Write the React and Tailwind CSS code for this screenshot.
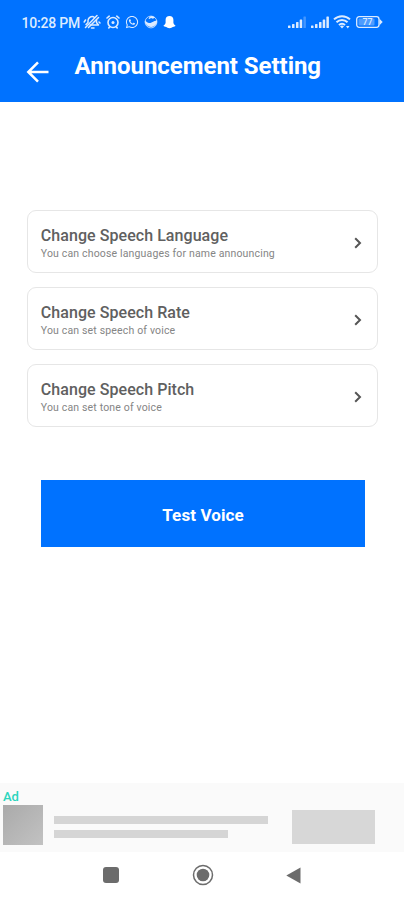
import { FaWhatsapp } from 'react-icons/fa';

const settings = [
  {
    id: 'language',
    title: 'Change Speech Language',
    description: 'You can choose languages for name announcing',
  },
  {
    id: 'rate',
    title: 'Change Speech Rate',
    description: 'You can set speech of voice',
  },
  {
    id: 'pitch',
    title: 'Change Speech Pitch',
    description: 'You can set tone of voice',
  },
];

const BellOffIcon = () => (
  <svg
    className="w-[18px] h-4"
    viewBox="0 0 18 16"
    fill="none"
    stroke="currentColor"
    strokeWidth="1.5"
    strokeLinecap="round"
    strokeLinejoin="round"
  >
    <path d="M3 10.500 5 8.500V6.500a4 4 0 0 1 6.500-3M13.500 6v2.500l2 2.500H7M8.500 14h2.500" />
    <path d="M2.500 13.500 14 1.500M5.500 13.500 15.500 3.500M1.200 8l1.300-2M16 8l1 1" />
  </svg>
);

const AlarmIcon = () => (
  <svg
    className="w-3.5 h-3.5"
    viewBox="0 0 14 14"
    fill="none"
    stroke="currentColor"
    strokeWidth="1.600"
    strokeLinecap="round"
  >
    <circle cx="7" cy="7.500" r="5" />
    <path d="M1 3 3.200 1.200M13 3l-2.200-1.800M3.500 12l-.7.900M10.500 12l.7.900" />
    <circle cx="7" cy="7.500" r="1.500" fill="currentColor" stroke="none" />
  </svg>
);

const BallIcon = () => (
  <svg className="w-3.5 h-3.5" viewBox="0 0 14 14">
    <circle
      cx="7"
      cy="7"
      r="5.900"
      fill="none"
      stroke="currentColor"
      strokeWidth="0.800"
    />
    <path
      d="M.8 6c1.500 0 2.500 2 4.500 2C8 8 9 6 13.200 5.500A6.200 6.200 0 0 1 .8 6z"
      fill="currentColor"
    />
    <path d="M4.500 3.500C5.500 2 6 1.200 8 .9l3 1.300-2 1.600-2-.8-1.500 1z" fill="currentColor" />
  </svg>
);

const GhostIcon = () => (
  <svg className="w-[13px] h-3.5 text-white" viewBox="0 0 13 14">
    <path
      d="M6.500 1C4 1 2.600 2.600 2.600 4.800v3C2.300 9.200 1.500 10 .5 10.600c.3 1.200 1.600 1.200 2.600 1.400.9.400 1.700 1.200 3.400 1.200s2.500-.8 3.400-1.200c1-.2 2.300-.2 2.600-1.400-1-.6-1.800-1.400-2.100-2.800v-3C10.400 2.600 9 1 6.500 1z"
      fill="currentColor"
    />
  </svg>
);

const SignalIcon = ({ weak }) => (
  <svg className="w-[18px] h-3" viewBox="0 0 18 12" fill="currentColor">
    <rect x="0" y="9.500" width="2.500" height="2.500" rx="0.600" />
    <rect x="4" y="8" width="2.500" height="4" rx="0.600" />
    <rect x="8" y="6" width="2.500" height="6" rx="0.600" />
    <rect x="11.700" y="3.500" width="2.500" height="8.500" rx="0.600" />
    <rect
      x="15.400"
      y="0.500"
      width="2.500"
      height="11.500"
      rx="0.600"
      opacity={weak ? 0.3 : 1}
    />
  </svg>
);

const WifiIcon = () => (
  <svg
    className="w-[18px] h-3.5"
    viewBox="0 0 18 14"
    fill="none"
    stroke="currentColor"
    strokeWidth="2"
  >
    <path d="M1 4.400a11.500 11.500 0 0 1 16 0M3.500 7.300a7.800 7.800 0 0 1 11 0M6 10.100a4.200 4.200 0 0 1 6 0" />
    <path d="M9 13.600 7 11.300a3 3 0 0 1 4 0z" fill="currentColor" stroke="none" />
    <path d="M13 11h3.500l-1.700 2.600z" fill="currentColor" stroke="none" />
  </svg>
);

const BatteryIcon = () => (
  <div className="relative w-[27px] h-3 flex items-center">
    <svg className="absolute inset-0 w-[27px] h-3" viewBox="0 0 27 12">
      <rect
        x="0.700"
        y="0.700"
        width="22.300"
        height="10.600"
        rx="2.500"
        fill="none"
        stroke="currentColor"
        strokeWidth="1.300"
      />
      <rect x="2.500" y="2.500" width="16" height="7" rx="1" fill="currentColor" opacity="0.350" />
      <path d="M23.500 2.800 26.700 6l-3.200 3.200z" fill="currentColor" />
    </svg>
    <span className="relative w-[23px] text-center text-[9px] leading-none font-medium">
      77
    </span>
  </div>
);

const StatusBar = () => (
  <div className="h-11 pl-[21px] pr-[21px] flex items-center justify-between text-[#dcebff]">
    <div className="flex items-center">
      <span className="w-[62px] pt-px pl-[0.500px] text-sm leading-5 font-medium tracking-[-0.2px] whitespace-nowrap">
        10:28 PM
      </span>
      <BellOffIcon />
      <div className="flex items-center gap-[5px] ml-[5px]">
        <AlarmIcon />
        <FaWhatsapp className="w-3.5 h-3.5" />
        <BallIcon />
        <GhostIcon />
      </div>
    </div>
    <div className="flex items-center">
      <SignalIcon weak />
      <div className="flex ml-[5px] mr-1">
        <SignalIcon />
      </div>
      <WifiIcon />
      <div className="ml-[5px]">
        <BatteryIcon />
      </div>
    </div>
  </div>
);

const Header = () => (
  <header className="h-[102px] bg-[#0072ff] text-white">
    <StatusBar />
    <div className="flex items-start pl-[26px]">
      <button className="mt-[17px]" aria-label="Back">
        <svg
          className="w-[23px] h-[22px]"
          viewBox="0 0 23 22"
          fill="none"
          stroke="currentColor"
          strokeWidth="2.500"
        >
          <path d="M22.500 11H2.500M12 1.300 2.300 11l9.700 9.700" />
        </svg>
      </button>
      <h1 className="ml-[25.500px] mt-1.5 text-2xl leading-8 font-bold tracking-[-0.04px] whitespace-nowrap">
        Announcement Setting
      </h1>
    </div>
  </header>
);

const SettingCard = ({ item }) => (
  <button className="w-full h-[63px] pl-3 pr-[15px] flex items-center justify-between rounded-[9px] border-[1.500px] border-[#e6e6e6] text-left">
    <div className="pt-[5px] pl-[0.800px] whitespace-nowrap">
      <p className="text-base leading-[18px] font-medium tracking-[0.06px] text-[#606060]">
        {item.title}
      </p>
      <p className="mt-0.5 text-[10.500px] leading-[14px] tracking-[0.160px] text-[#858585]">
        {item.description}
      </p>
    </div>
    <svg
      className="w-2 h-3 mt-[3px]"
      viewBox="0 0 8 12"
      fill="none"
      stroke="#555555"
      strokeWidth="2"
    >
      <path d="M1.200 1.200 6 6l-4.800 4.800" />
    </svg>
  </button>
);

const AdBanner = () => (
  <div className="h-[69px] bg-[#fafafa] flex items-start pl-[3px]">
    <div className="w-10">
      <p className="pt-[6px] h-[22px] text-[13px] leading-4 font-medium text-[#2cd5bd]">
        Ad
      </p>
      <div className="h-10 bg-linear-to-br from-[#aaaaaa] to-[#c2c2c2]" />
    </div>
    <div className="ml-[11px] mt-[33px] w-[214px]">
      <div className="h-[7.500px] bg-[#d5d5d5]" />
      <div className="mt-[6.500px] h-2 w-[174px] bg-[#d5d5d5]" />
    </div>
    <div className="ml-6 mt-[27px] w-[83px] h-[34px] bg-[#d7d7d7]" />
  </div>
);

const NavigationBar = () => (
  <div className="h-12 pb-0.5 flex items-center justify-between px-[103px] text-[#6c6c6c]">
    <div className="w-4 h-4 rounded-[3px] bg-[#6c6c6c]" />
    <svg className="w-[22px] h-[22px]" viewBox="0 0 22 22">
      <circle cx="11" cy="11" r="9.500" fill="none" stroke="currentColor" strokeWidth="1.500" />
      <circle cx="11" cy="11" r="6.300" fill="currentColor" />
    </svg>
    <svg className="w-[15px] h-[17px]" viewBox="0 0 15 17">
      <path d="M14.500.5v16L.3 8.500z" fill="currentColor" />
    </svg>
  </div>
);

const App = () => {
  return (
    <div className="w-[404px] h-[900px] flex flex-col overflow-hidden bg-white font-['Roboto',sans-serif]">
      <Header />
      <main className="flex-1">
        <div className="mt-[108px] ml-[27px] w-[351px] flex flex-col gap-3.5">
          {settings.map((item) => (
            <SettingCard key={item.id} item={item} />
          ))}
        </div>
        <button className="mt-[53px] ml-[41px] w-[324px] h-[67px] flex items-center justify-center pt-1 bg-[#0072ff] text-[17px] font-bold tracking-[0.1px] text-white">
          Test Voice
        </button>
      </main>
      <AdBanner />
      <NavigationBar />
    </div>
  );
};

export default App;
